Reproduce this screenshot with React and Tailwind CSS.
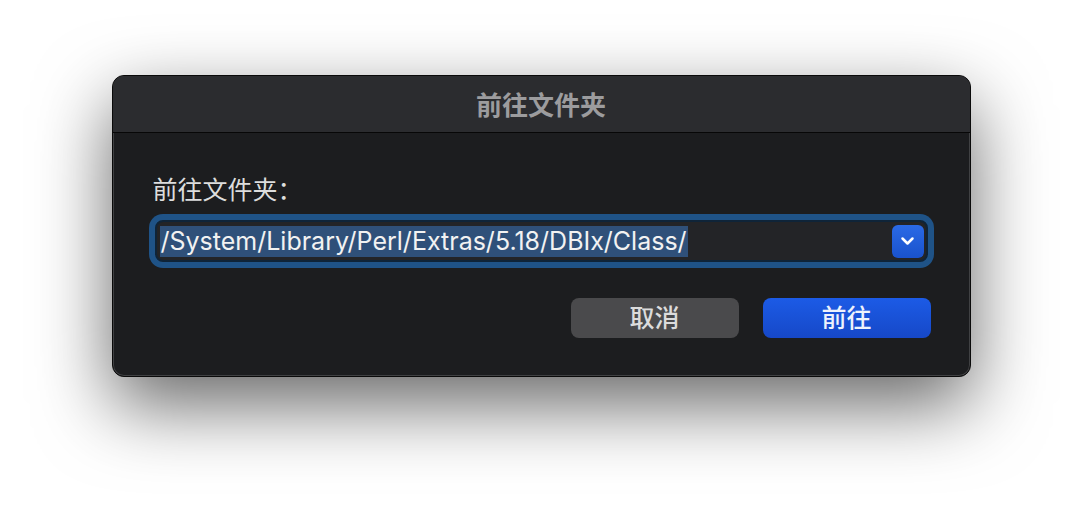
export default function App() {
  const cjk = { fontFamily: '"Noto Sans CJK SC", "Noto Sans", sans-serif' };
  return (
    <div className="w-[1082px] h-[526px] bg-white overflow-hidden pt-[75px]">
      <div className="mx-auto w-[859px] h-[302px] rounded-[12px] border border-[#0a0a0a] bg-[#1c1d1f] shadow-[0_28px_75px_rgba(0,0,0,0.6),inset_0_0_0_1px_rgba(255,255,255,0.16)] overflow-hidden flex flex-col">
        <div
          className="h-[57px] shrink-0 bg-[#2b2c2f] border-b border-[#070707] flex items-center justify-center text-[26px] font-bold text-[#9c9c9e] leading-none"
          style={cjk}
        >
          前往文件夹
        </div>
        <div className="flex flex-col px-[42px] pt-[41px]">
          <div className="h-[28px] text-[25px] leading-[28px] text-[#dddddd] -ml-[2px]" style={cjk}>
            前往文件夹：
          </div>
          <div className="mt-[18px] h-[42px] rounded-[8px] border-2 border-[#0f2438] bg-[#232427] shadow-[0_0_0_6px_#1f5387] flex items-center pl-[3px] pr-[2px]">
            <div className="flex-1 flex items-center">
              <span
                className="bg-[#2f5079] text-[#f2f2f2] text-[25px] leading-[31px] px-[1px]"
                style={{ fontFamily: 'Inter, "Liberation Sans", sans-serif' }}
              >
                /System/Library/Perl/Extras/5.18/DBIx/Class/
              </span>
            </div>
            <div className="w-[32px] h-[33px] rounded-[6px] bg-gradient-to-b from-[#2a6ae6] to-[#1a52cc] flex items-center justify-center">
              <svg width="15" height="10" viewBox="0 0 15 10" fill="none">
                <path d="M2.5 2.5 L7.5 7.5 L12.5 2.5" stroke="#ffffff" strokeWidth="2.5" strokeLinecap="round" strokeLinejoin="round" />
              </svg>
            </div>
          </div>
          <div className="mt-[36px] flex justify-end gap-[24px]">
            <button
              className="w-[168px] h-[40px] rounded-[8px] bg-[#4a4a4c] text-[#dcdcdc] text-[25px] font-medium leading-none flex items-center justify-center pb-[3px]"
              style={cjk}
            >
              取消
            </button>
            <button
              className="w-[168px] h-[40px] rounded-[8px] bg-gradient-to-b from-[#1c5be6] to-[#1648c8] text-[#eef2fc] text-[25px] font-medium leading-none flex items-center justify-center mr-[-3px] pb-[3px]"
              style={cjk}
            >
              前往
            </button>
          </div>
        </div>
      </div>
    </div>
  );
}
